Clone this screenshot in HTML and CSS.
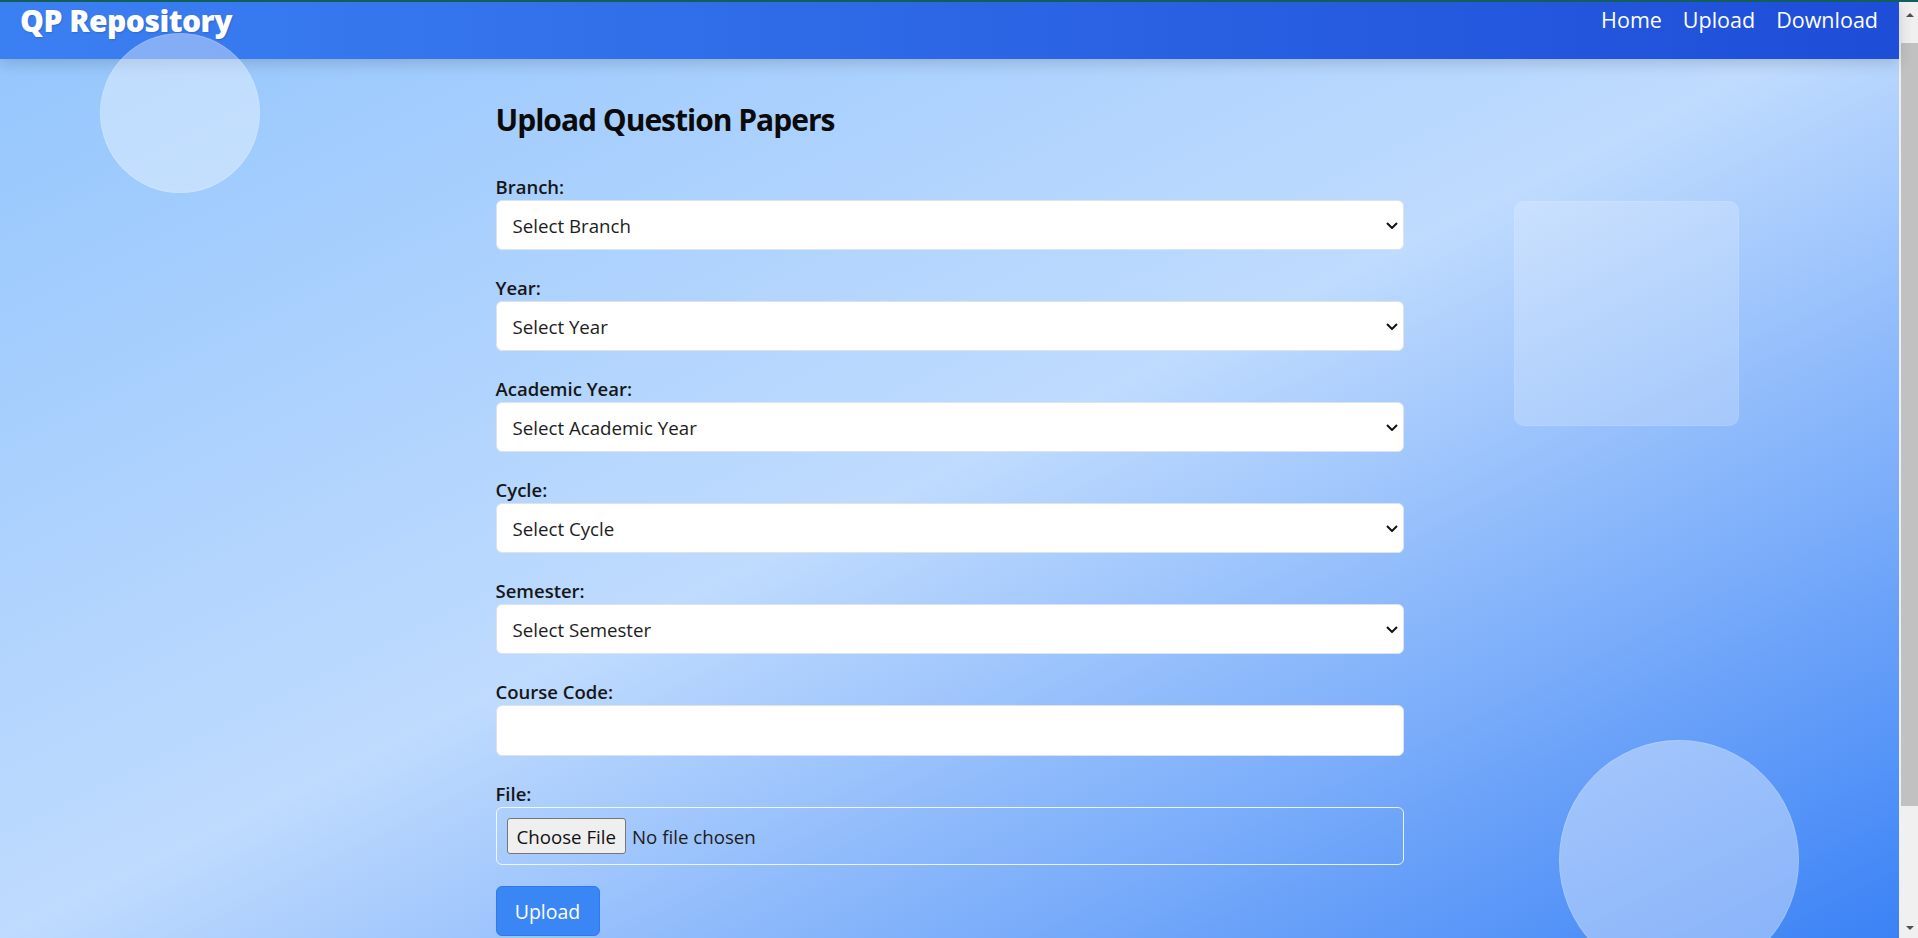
FILE: index.html
```html
<!DOCTYPE html>
<html lang="en">
<head>
<meta charset="utf-8">
<title>QP Repository - Upload</title>
<link rel="stylesheet" href="styles.css">
</head>
<body>
<div class="window">
  <div class="topstrip"></div>
  <div class="viewport">
    <div class="page">
      <div class="shape circle circle-top"></div>
      <div class="shape square"></div>
      <div class="shape circle circle-bottom"></div>

      <header class="navbar">
        <a class="brand" href="#">QP Repository</a>
        <nav class="nav-links">
          <a href="#">Home</a>
          <a href="#">Upload</a>
          <a href="#">Download</a>
        </nav>
      </header>

      <main class="content">
        <h2 class="title">Upload Question Papers</h2>
        <form class="upload-form">
          <div class="group">
            <label for="branch">Branch:</label>
            <div class="select-wrap">
              <select id="branch"><option>Select Branch</option></select>
              <svg class="chev" viewBox="0 0 12 7" width="12" height="7"><path d="M1 1 6 6 11 1"/></svg>
            </div>
          </div>
          <div class="group">
            <label for="year">Year:</label>
            <div class="select-wrap">
              <select id="year"><option>Select Year</option></select>
              <svg class="chev" viewBox="0 0 12 7" width="12" height="7"><path d="M1 1 6 6 11 1"/></svg>
            </div>
          </div>
          <div class="group">
            <label for="ay">Academic Year:</label>
            <div class="select-wrap">
              <select id="ay"><option>Select Academic Year</option></select>
              <svg class="chev" viewBox="0 0 12 7" width="12" height="7"><path d="M1 1 6 6 11 1"/></svg>
            </div>
          </div>
          <div class="group">
            <label for="cycle">Cycle:</label>
            <div class="select-wrap">
              <select id="cycle"><option>Select Cycle</option></select>
              <svg class="chev" viewBox="0 0 12 7" width="12" height="7"><path d="M1 1 6 6 11 1"/></svg>
            </div>
          </div>
          <div class="group">
            <label for="sem">Semester:</label>
            <div class="select-wrap">
              <select id="sem"><option>Select Semester</option></select>
              <svg class="chev" viewBox="0 0 12 7" width="12" height="7"><path d="M1 1 6 6 11 1"/></svg>
            </div>
          </div>
          <div class="group">
            <label for="code">Course Code:</label>
            <input id="code" class="text-input" type="text">
          </div>
          <div class="group group-file">
            <label for="file">File:</label>
            <input id="file" class="file-input" type="file">
          </div>
          <button type="button" class="btn-upload">Upload</button>
        </form>
      </main>
    </div>
    <div class="scrollbar">
      <div class="sb-btn"><span class="tri-up"></span></div>
      <div class="sb-thumb"></div>
      <div class="sb-space"></div>
      <div class="sb-btn sb-btn-down"><span class="tri-down"></span></div>
    </div>
  </div>
</div>
</body>
</html>
```
FILE: styles.css
```css
* { box-sizing: border-box; }

html, body {
  margin: 0;
  padding: 0;
  height: 938px;
  overflow: hidden;
}

body {
  font-family: "Open Sans", "Noto Sans", "Liberation Sans", sans-serif;
  color: #212529;
}

.window {
  display: flex;
  flex-direction: column;
  height: 938px;
}

.topstrip {
  position: relative;
  z-index: 4;
  height: 2px;
  background: #125e5a;
  flex: none;
}

.viewport {
  flex: 1;
  display: flex;
  min-height: 0;
}

.page {
  position: relative;
  flex: 1;
  background: linear-gradient(to bottom right, #93c5fd 0%, #bfdbfe 50%, #3b82f6 100%);
}

/* decorative floating shapes */
.shape {
  position: absolute;
  z-index: 2;
  pointer-events: none;
}

.circle {
  border-radius: 50%;
  background: rgba(255, 255, 255, 0.38);
  border: 1px solid rgba(255, 255, 255, 0.15);
}

.circle-top {
  left: 100px;
  top: 31px;
  width: 160px;
  height: 160px;
}

.circle-bottom {
  left: 1559px;
  top: 738px;
  width: 240px;
  height: 240px;
}

.square {
  left: 1514px;
  top: 199px;
  width: 225px;
  height: 225px;
  border-radius: 10px;
  background: rgba(255, 255, 255, 0.2);
  border: 1px solid rgba(255, 255, 255, 0.08);
}

/* navbar */
.navbar {
  position: relative;
  height: 57px;
  display: flex;
  justify-content: space-between;
  align-items: flex-start;
  padding: 0 21px 0 20px;
  background: linear-gradient(90deg, #3b80f2 0%, #1e4dd8 100%);
  box-shadow: 0 4px 14px rgba(0, 0, 0, 0.16);
}

.brand {
  position: relative;
  z-index: 3;
  color: #ffffff;
  text-decoration: none;
  font-size: 30px;
  font-weight: 800;
  line-height: 36px;
  padding-top: 1px;
  letter-spacing: -0.5px;
  text-shadow: 1px 1px 2px rgba(0, 0, 0, 0.15);
}

.nav-links {
  display: flex;
  gap: 21px;
  margin-top: 5px;
}

.nav-links a {
  color: #ffffff;
  text-decoration: none;
  font-size: 21.5px;
  font-weight: 500;
  line-height: 26px;
}

/* content */
.content {
  width: 908px;
  margin: 0 auto;
  padding-top: 42px;
}

.title {
  margin: 0 0 34px;
  font-size: 30px;
  font-weight: 700;
  line-height: 38px;
  color: #0b0b0b;
  letter-spacing: -1px;
}

.upload-form {
  display: flex;
  flex-direction: column;
  align-items: stretch;
}

.group {
  display: flex;
  flex-direction: column;
  margin-bottom: 24px;
}

.group label {
  display: block;
  font-size: 18.5px;
  font-weight: 600;
  line-height: 27px;
  color: #161616;
}

.select-wrap {
  position: relative;
}

.select-wrap select {
  appearance: none;
  -webkit-appearance: none;
  display: block;
  width: 100%;
  height: 50px;
  padding: 0 30px 0 16px;
  border: 1px solid #dde3ea;
  border-radius: 6px;
  background: #ffffff;
  font-family: inherit;
  font-size: 18.7px;
  color: #1d1d1d;
}

.chev {
  position: absolute;
  right: 6px;
  top: 22px;
  fill: none;
  stroke: #111111;
  stroke-width: 2;
  pointer-events: none;
}

.text-input {
  display: block;
  width: 100%;
  height: 51px;
  padding: 0 16px;
  border: 1px solid #dde3ea;
  border-radius: 6px;
  background: #ffffff;
  font-family: inherit;
  font-size: 18.7px;
}

.group-file {
  margin-bottom: 21px;
}

.file-input {
  display: block;
  width: 100%;
  height: 58px;
  padding: 10px;
  border: 1px solid rgba(255, 255, 255, 0.85);
  border-radius: 6px;
  background: transparent;
  font-family: inherit;
  font-size: 18.7px;
  line-height: 36px;
  color: #1d1d1d;
}

.file-input::file-selector-button {
  height: 36px;
  margin: 0 6px 0 0;
  padding: 0 9px;
  border: 1px solid #767676;
  border-radius: 3px;
  background: #efefef;
  font-family: inherit;
  font-size: 18.7px;
  color: #111111;
}

.btn-upload {
  align-self: flex-start;
  width: 104px;
  height: 50px;
  padding: 0;
  border: 1px solid #2f78ee;
  border-radius: 6px;
  background: #3b86f5;
  color: #ffffff;
  font-family: inherit;
  font-size: 19.5px;
}

/* fake window scrollbar */
.scrollbar {
  flex: none;
  width: 19px;
  display: flex;
  flex-direction: column;
  padding-left: 2px;
  background: #f0f0f0;
}

.sb-btn {
  height: 26px;
  display: flex;
  align-items: center;
  justify-content: center;
  flex: none;
}

.sb-btn-down {
  height: 20px;
}

.tri-up {
  width: 0;
  height: 0;
  border-left: 4px solid transparent;
  border-right: 4px solid transparent;
  border-bottom: 4px solid #505050;
}

.tri-down {
  width: 0;
  height: 0;
  border-left: 4px solid transparent;
  border-right: 4px solid transparent;
  border-top: 4px solid #505050;
}

.sb-thumb {
  flex: none;
  margin-top: 15px;
  height: 763px;
  background: #c1c1c1;
}

.sb-space {
  flex: 1;
}
```
